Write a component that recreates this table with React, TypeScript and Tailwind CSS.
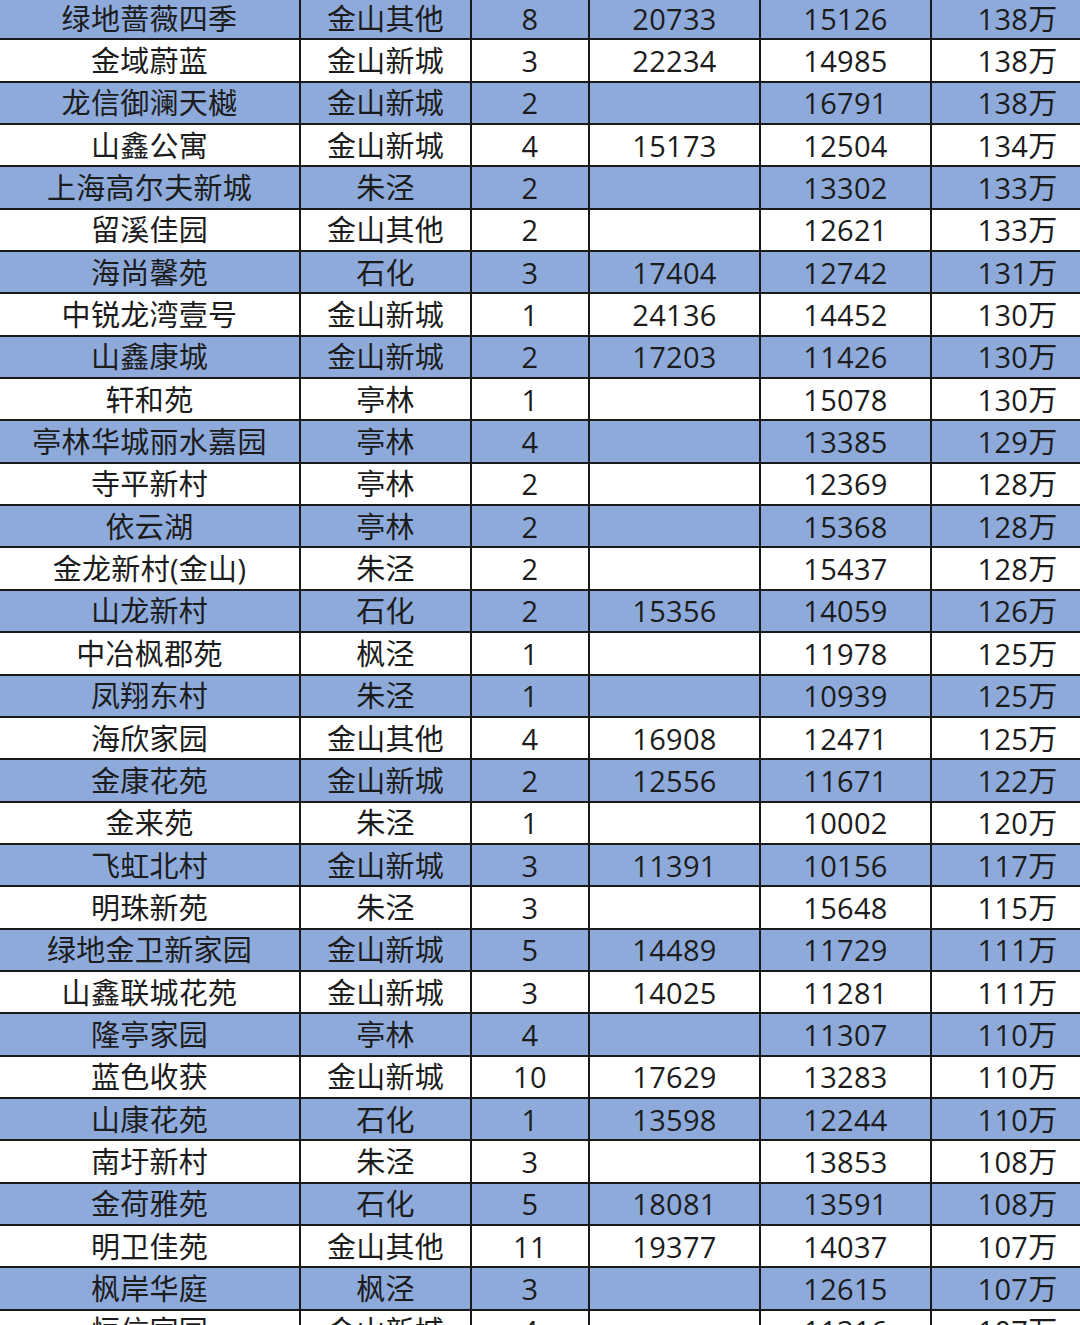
const rows: [string, string, string, string, string, string][] = [
  ["绿地蔷薇四季", "金山其他", "8", "20733", "15126", "138万"],
  ["金域蔚蓝", "金山新城", "3", "22234", "14985", "138万"],
  ["龙信御澜天樾", "金山新城", "2", "", "16791", "138万"],
  ["山鑫公寓", "金山新城", "4", "15173", "12504", "134万"],
  ["上海高尔夫新城", "朱泾", "2", "", "13302", "133万"],
  ["留溪佳园", "金山其他", "2", "", "12621", "133万"],
  ["海尚馨苑", "石化", "3", "17404", "12742", "131万"],
  ["中锐龙湾壹号", "金山新城", "1", "24136", "14452", "130万"],
  ["山鑫康城", "金山新城", "2", "17203", "11426", "130万"],
  ["轩和苑", "亭林", "1", "", "15078", "130万"],
  ["亭林华城丽水嘉园", "亭林", "4", "", "13385", "129万"],
  ["寺平新村", "亭林", "2", "", "12369", "128万"],
  ["依云湖", "亭林", "2", "", "15368", "128万"],
  ["金龙新村(金山)", "朱泾", "2", "", "15437", "128万"],
  ["山龙新村", "石化", "2", "15356", "14059", "126万"],
  ["中冶枫郡苑", "枫泾", "1", "", "11978", "125万"],
  ["凤翔东村", "朱泾", "1", "", "10939", "125万"],
  ["海欣家园", "金山其他", "4", "16908", "12471", "125万"],
  ["金康花苑", "金山新城", "2", "12556", "11671", "122万"],
  ["金来苑", "朱泾", "1", "", "10002", "120万"],
  ["飞虹北村", "金山新城", "3", "11391", "10156", "117万"],
  ["明珠新苑", "朱泾", "3", "", "15648", "115万"],
  ["绿地金卫新家园", "金山新城", "5", "14489", "11729", "111万"],
  ["山鑫联城花苑", "金山新城", "3", "14025", "11281", "111万"],
  ["隆亭家园", "亭林", "4", "", "11307", "110万"],
  ["蓝色收获", "金山新城", "10", "17629", "13283", "110万"],
  ["山康花苑", "石化", "1", "13598", "12244", "110万"],
  ["南圩新村", "朱泾", "3", "", "13853", "108万"],
  ["金荷雅苑", "石化", "5", "18081", "13591", "108万"],
  ["明卫佳苑", "金山其他", "11", "19377", "14037", "107万"],
  ["枫岸华庭", "枫泾", "3", "", "12615", "107万"],
  ["恒信家园", "金山新城", "4", "", "11316", "107万"],
];

export default function App() {
  return (
    <div
      className="h-[1325px] w-[1080px] overflow-hidden bg-white text-[29px] text-[#1c1c1c]"
      style={{ fontFamily: '"Open Sans", "Noto Sans CJK SC", sans-serif' }}
    >
      {/* table is wider than the shot; last column is cut at the right edge */}
      <div className="-mt-[2px] w-[1103px]">
        {rows.map((r, i) => (
          <div
            key={i}
            className={`grid h-[42.35px] grid-cols-[301px_171px_118px_171px_171px_171px] border-b-2 border-[#1a1a1a] ${
              i % 2 === 0 ? "bg-[#8eaadb]" : "bg-white"
            }`}
          >
            {r.map((c, j) => (
              <div
                key={j}
                className={`flex items-center justify-center leading-none tracking-[0.3px] ${
                  j < 5 ? "border-r-2 border-[#1a1a1a]" : ""
                }`}
              >
                {c}
              </div>
            ))}
          </div>
        ))}
      </div>
    </div>
  );
}
